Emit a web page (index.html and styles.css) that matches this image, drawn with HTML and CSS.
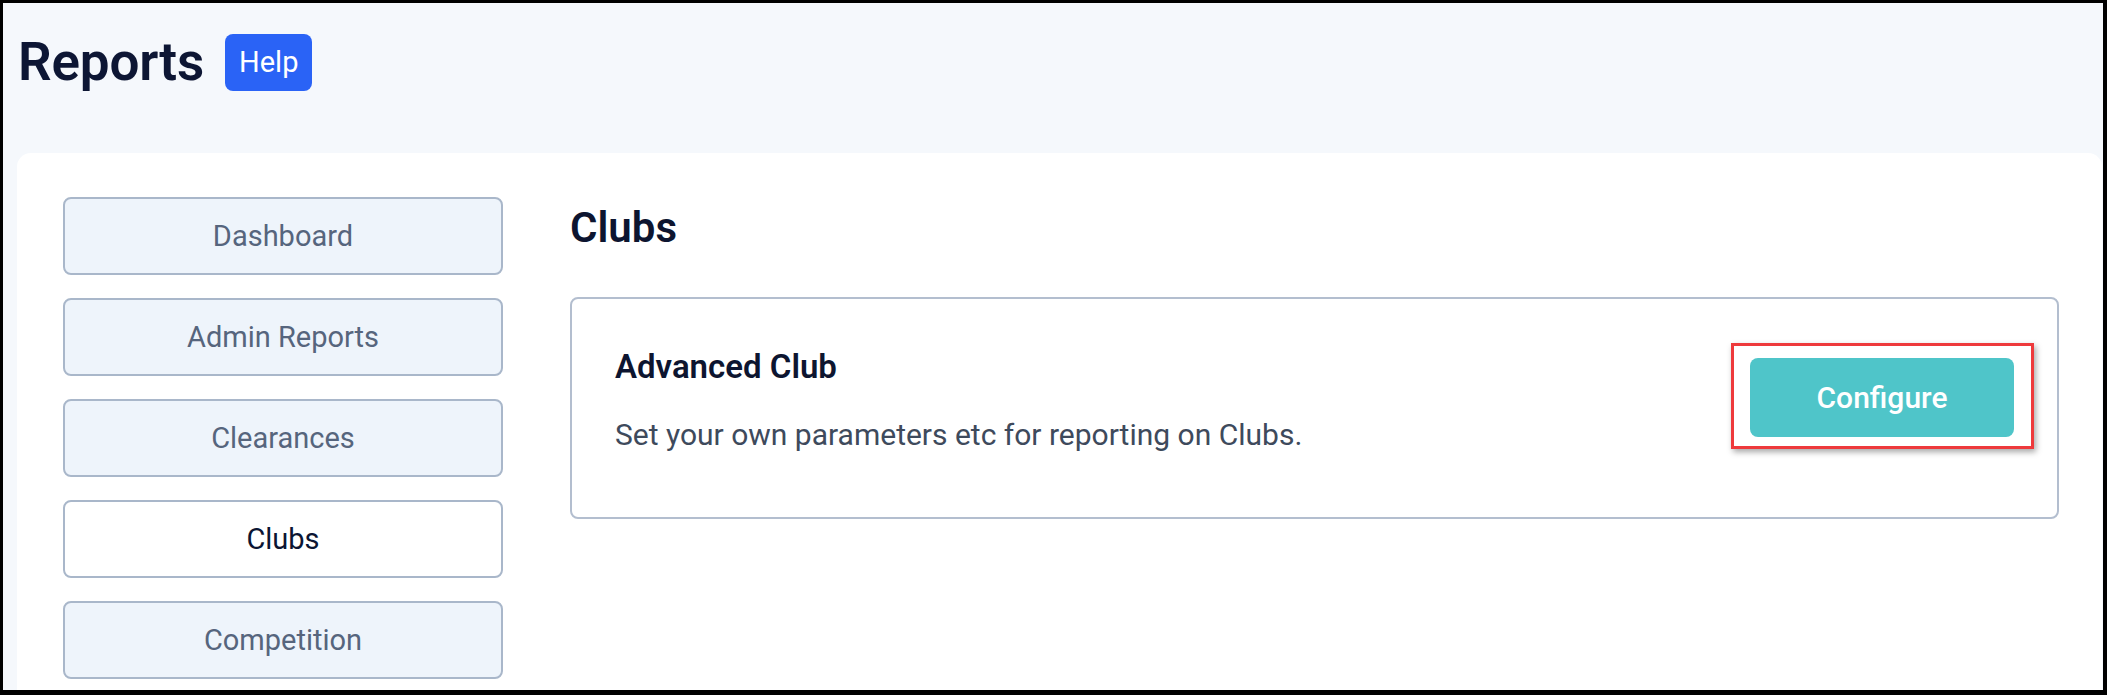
FILE: index.html
```html
<!DOCTYPE html>
<html lang="en">
<head>
<meta charset="utf-8">
<title>Reports</title>
<link rel="stylesheet" href="styles.css">
</head>
<body>
<div class="frame">
  <header class="page-head">
    <h1 class="page-title">Reports</h1>
    <a class="help-btn" href="#">Help</a>
  </header>
  <section class="card">
    <nav class="side-nav">
      <a class="nav-item" href="#">Dashboard</a>
      <a class="nav-item" href="#">Admin Reports</a>
      <a class="nav-item" href="#">Clearances</a>
      <a class="nav-item active" href="#">Clubs</a>
      <a class="nav-item" href="#">Competition</a>
    </nav>
    <main class="content">
      <h2 class="section-title">Clubs</h2>
      <div class="report-box">
        <div class="report-text">
          <h3 class="report-name">Advanced Club</h3>
          <p class="report-desc">Set your own parameters etc for reporting on Clubs.</p>
        </div>
        <div class="report-action">
          <button class="configure-btn" type="button">Configure</button>
          <span class="highlight"></span>
        </div>
      </div>
    </main>
  </section>
</div>
</body>
</html>
```

FILE: styles.css
```css
* { box-sizing: border-box; }

html, body {
  margin: 0;
  padding: 0;
  background: #000;
}

body {
  font-family: Roboto, "Liberation Sans", Arial, sans-serif;
}

.frame {
  width: 2107px;
  height: 695px;
  border-style: solid;
  border-color: #000;
  border-width: 3px 4px 5px 3px;
  background: #f5f8fc;
  display: flex;
  flex-direction: column;
  overflow: hidden;
}

.page-head {
  display: flex;
  align-items: center;
  gap: 21px;
  padding: 31px 15px 0;
  height: 88px;
}

.page-title {
  margin: 0;
  font-size: 53px;
  font-weight: 600;
  color: #0d1634;
  line-height: 57px;
  letter-spacing: -0.2px;
}

.help-btn {
  display: inline-flex;
  align-items: center;
  height: 57px;
  padding: 0 14px;
  border-radius: 8px;
  background: #2a63f6;
  color: #fff;
  font-size: 29px;
  text-decoration: none;
  line-height: 1;
}

.card {
  flex: 1;
  margin: 62px 1px 0 14px;
  background: #fff;
  border-radius: 14px 14px 0 0;
  padding: 44px 43px 0 46px;
  display: grid;
  grid-template-columns: 440px 1fr;
  column-gap: 67px;
  align-items: start;
}

.side-nav {
  display: flex;
  flex-direction: column;
  gap: 23px;
}

.nav-item {
  display: flex;
  align-items: center;
  justify-content: center;
  height: 78px;
  border: 2px solid #a9b7ca;
  border-radius: 8px;
  background: #eef4fb;
  color: #56657d;
  font-size: 29px;
  font-weight: 400;
  text-decoration: none;
}

.nav-item.active {
  background: #fff;
  color: #0b1533;
}

.content {
  display: flex;
  flex-direction: column;
}

.section-title {
  margin: 6px 0 44px;
  font-size: 42px;
  line-height: 50px;
  font-weight: 600;
  color: #0d1530;
}

.report-box {
  display: flex;
  justify-content: space-between;
  align-items: flex-start;
  height: 222px;
  border: 2px solid #b3becf;
  border-radius: 8px;
  padding: 49px 43px 0 43px;
}

.report-name {
  margin: 0 0 32px;
  font-size: 33px;
  line-height: 38px;
  font-weight: 600;
  color: #0d1530;
}

.report-desc {
  margin: 0;
  font-size: 30px;
  line-height: 34px;
  color: #3e4a5c;
}

.report-action {
  position: relative;
  margin-top: 10px;
}

.configure-btn {
  display: block;
  width: 264px;
  height: 79px;
  border: 0;
  border-radius: 8px;
  background: #4fc5c9;
  color: #fff;
  font-family: inherit;
  font-size: 30px;
  font-weight: 500;
  padding: 0;
}

.highlight {
  position: absolute;
  top: -15px;
  bottom: -12px;
  left: -19px;
  right: -20px;
  border: 3px solid #ee3a3c;
  box-shadow: 2px 3px 6px rgba(0, 0, 0, 0.35);
  pointer-events: none;
}
```
